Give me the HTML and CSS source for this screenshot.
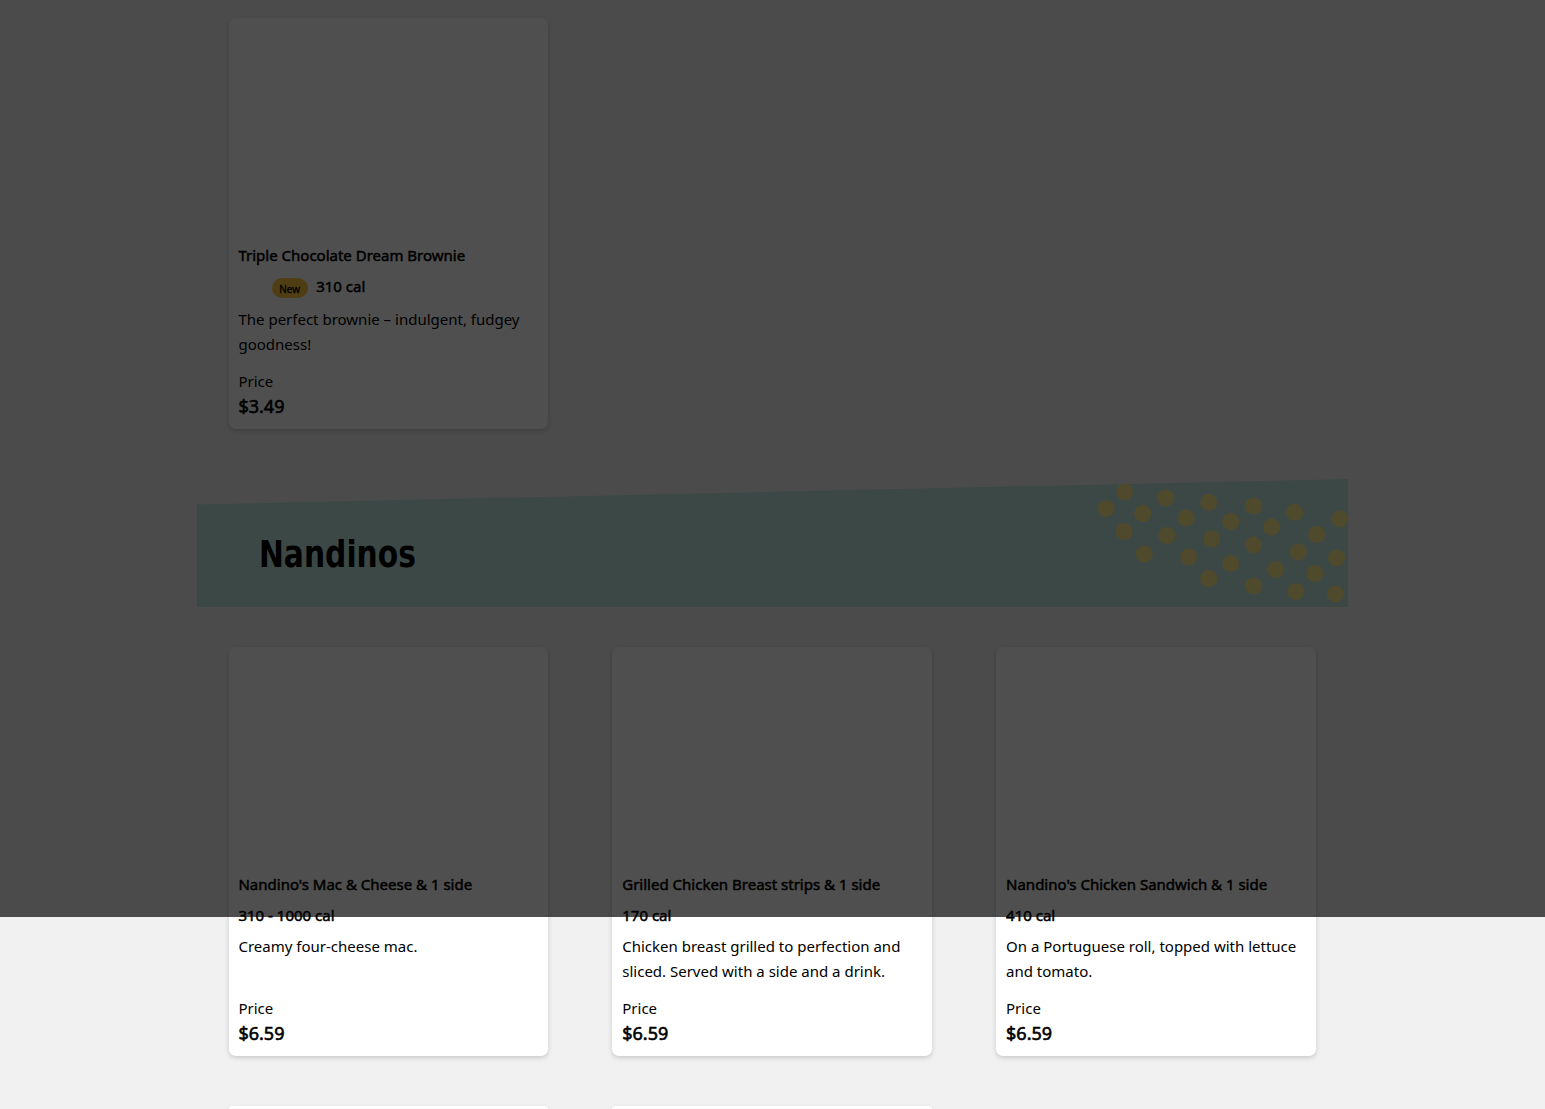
FILE: index.html
```
<!DOCTYPE html>
<html lang="en">
<head>
<meta charset="UTF-8">
<meta name="viewport" content="width=device-width, initial-scale=1.0">
<title>Kids Menu</title>
<link rel="stylesheet" href="styles.css">
</head>
<body>
  <main class="menu">
    <section class="products">
      <article class="card">
        <div class="card-image"></div>
        <h3 class="card-title">Triple Chocolate Dream Brownie</h3>
        <div class="card-info has-badge"><span class="badge">New</span><span class="calories">310 cal</span></div>
        <p class="card-text">The perfect brownie – indulgent, fudgey goodness!</p>
        <div class="price-label">Price</div>
        <div class="price">$3.49</div>
      </article>
    </section>

    <header class="banner">
      <svg class="banner-bg" viewBox="0 0 1152 128">
        <path d="M0 25.500 1152 0v128H0z" fill="#c2e8e2"/>
        <g class="dots">
          <circle cx="909.500" cy="29.500" r="8.500"/>
          <circle cx="928" cy="13" r="8.500"/>
          <circle cx="946" cy="34.500" r="8.500"/>
          <circle cx="927.500" cy="52.500" r="8.500"/>
          <circle cx="947.500" cy="75" r="8.500"/>
          <circle cx="969" cy="19" r="8.500"/>
          <circle cx="989.500" cy="39" r="8.500"/>
          <circle cx="970" cy="56.500" r="8.500"/>
          <circle cx="992" cy="78" r="8.500"/>
          <circle cx="1012" cy="23.500" r="8.500"/>
          <circle cx="1034" cy="42.500" r="8.500"/>
          <circle cx="1015" cy="60" r="8.500"/>
          <circle cx="1034" cy="84.500" r="8.500"/>
          <circle cx="1012" cy="99.500" r="8.500"/>
          <circle cx="1057" cy="27" r="8.500"/>
          <circle cx="1075" cy="48" r="8.500"/>
          <circle cx="1057" cy="66" r="8.500"/>
          <circle cx="1079" cy="90.500" r="8.500"/>
          <circle cx="1057" cy="107" r="8.500"/>
          <circle cx="1098" cy="33.500" r="8.500"/>
          <circle cx="1120" cy="55.500" r="8.500"/>
          <circle cx="1101.500" cy="73" r="8.500"/>
          <circle cx="1118" cy="94.500" r="8.500"/>
          <circle cx="1099" cy="112.500" r="8.500"/>
          <circle cx="1143" cy="40" r="8.500"/>
          <circle cx="1140" cy="79" r="8.500"/>
          <circle cx="1139" cy="115" r="8.500"/>
        </g>
        <text class="banner-title" x="62" y="88" textLength="157" lengthAdjust="spacingAndGlyphs">Nandinos</text>
      </svg>
    </header>

    <section class="products">
      <article class="card">
        <div class="card-image"></div>
        <h3 class="card-title">Nandino's Mac &amp; Cheese &amp; 1 side</h3>
        <div class="card-info"><span class="calories">310 - 1000 cal</span></div>
        <p class="card-text">Creamy four-cheese mac.</p>
        <div class="price-label">Price</div>
        <div class="price">$6.59</div>
      </article>
      <article class="card">
        <div class="card-image"></div>
        <h3 class="card-title">Grilled Chicken Breast strips &amp; 1 side</h3>
        <div class="card-info"><span class="calories">170 cal</span></div>
        <p class="card-text">Chicken breast grilled to perfection and sliced. Served with a side and a drink.</p>
        <div class="price-label">Price</div>
        <div class="price">$6.59</div>
      </article>
      <article class="card">
        <div class="card-image"></div>
        <h3 class="card-title">Nandino's Chicken Sandwich &amp; 1 side</h3>
        <div class="card-info"><span class="calories">410 cal</span></div>
        <p class="card-text">On a Portuguese roll, topped with lettuce and tomato.</p>
        <div class="price-label">Price</div>
        <div class="price">$6.59</div>
      </article>
      <article class="card card-next"></article>
      <article class="card card-next"></article>
    </section>
  </main>
  <div class="overlay"></div>
</body>
</html>
```

FILE: styles.css
```
* {
  box-sizing: border-box;
}
body {
  margin: 0;
  height: 1109px;
  overflow: hidden;
  background: #f1f1f1;
  color: #000;
  font-family: "Noto Sans", sans-serif;
  font-size: 15px;
  line-height: 25px;
}
.menu {
  width: 1151.7px;
  margin: 0 auto;
  padding-top: 18px;
}
.products {
  display: grid;
  grid-template-columns: repeat(3, 319.8px);
  gap: 50px 64px;
  padding: 0 32px;
}
.card {
  padding: 0 9.8px 10px;
  background: #fff;
  border-radius: 7px;
  box-shadow: 0 2px 5px rgba(0, 0, 0, 0.16);
}
.card-image {
  height: 225px;
}
.card-next {
  height: 3px;
  padding: 0;
  border-radius: 7px 7px 0 0;
}
.card-title {
  margin: 0 0 6px;
  font-size: 15px;
  font-weight: 400;
  -webkit-text-stroke: 0.5px #000;
}
.card-info {
  display: flex;
  align-items: center;
  height: 25px;
  margin-bottom: 6px;
}
.has-badge {
  gap: 8.5px;
  padding-left: 33.2px;
  margin-bottom: 8px;
}
.badge {
  width: 36px;
  height: 20px;
  margin-top: 3px;
  border-radius: 10px;
  background: #ffc83e;
  font-size: 10px;
  line-height: 22px;
  text-align: center;
  -webkit-text-stroke: 0.3px #000;
}
.calories {
  -webkit-text-stroke: 0.5px #000;
}
.card-text {
  height: 50px;
  margin: 0 0 12px;
}
.price {
  font-size: 18px;
  -webkit-text-stroke: 0.6px #000;
}
.banner {
  margin: 50px 0 40px;
}
.banner-bg {
  display: block;
  width: 100%;
  height: 128px;
}
.dots {
  fill: #ffed8c;
}
.banner-title {
  font-family: "DejaVu Sans Condensed", "DejaVu Sans", sans-serif;
  font-size: 37px;
  font-stretch: condensed;
  font-weight: 700;
}
/* page dimmer, stops short of the bottom of the page */
.overlay {
  position: absolute;
  top: 0;
  left: 0;
  width: 100%;
  height: 917px;
  background: rgba(0, 0, 0, 0.69);
}
```
